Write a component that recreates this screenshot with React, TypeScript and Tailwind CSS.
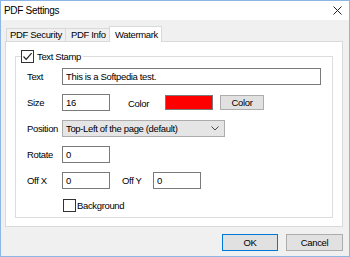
import React from "react";

function Check({ checked }: { checked?: boolean }) {
  return (
    <span className="w-[13px] h-[13px] border border-[#333333] bg-white flex items-center justify-center shrink-0">
      {checked && (
        <svg width="11" height="11" viewBox="0 0 11 11">
          <path d="M1.5 5.5L4.2 8.3L9.6 2.2" fill="none" stroke="#222" strokeWidth="1.2" />
        </svg>
      )}
    </span>
  );
}

function Input({ value, w }: { value: string; w: string }) {
  return (
    <div className={`${w} h-[17px] border border-[#7a7a7a] bg-white flex items-center pl-[3px] shrink-0`}>
      {value}
    </div>
  );
}

export default function App() {
  return (
    <div className="w-[350px] h-[257px] border border-[#8db6e6] bg-[#f0f0f0] flex flex-col font-['Liberation_Sans',Arial,sans-serif] text-[9.5px] tracking-[-0.35px] text-black leading-none whitespace-nowrap overflow-hidden">
      <div className="h-[19px] bg-white flex items-center justify-between pl-[3px] pr-[7px] shrink-0">
        <span className="text-[10px] tracking-[-0.3px]">PDF Settings</span>
        <svg width="9" height="9" viewBox="0 0 9 9">
          <path d="M0.5 0.5L8.5 8.5M8.5 0.5L0.5 8.5" stroke="#222" strokeWidth="1" />
        </svg>
      </div>
      <div className="pl-[4px] pt-[6px]">
        <div className="flex items-end h-[15px] pl-[1px]">
          <div className="w-[60px] h-[13px] border border-b-0 border-[#d9d9d9] bg-[#f0f0f0] flex items-center justify-center">
            PDF Security
          </div>
          <div className="w-[45px] h-[13px] border border-b-0 border-l-0 border-[#d9d9d9] bg-[#f0f0f0] flex items-center pl-[5px]">
            PDF Info
          </div>
          <div className="w-[53px] h-[16px] -mb-[1px] -ml-[2px] relative z-10 border border-b-0 border-[#d9d9d9] bg-white flex items-center pl-[5px]">
            Watermark
          </div>
        </div>
        <div className="w-[338px] h-[186px] bg-white border border-[#d9d9d9]">
          <fieldset className="ml-[9px] mt-[8px] w-[318px] h-[168px] border border-[#dcdcdc]">
            <legend className="ml-[5px] pr-[2px] flex items-center gap-[3px] h-[13px]">
              <Check checked />
              <span>Text Stamp</span>
            </legend>
            <div className="flex flex-col gap-[9px] pl-[11px] mt-[5px]">
              <div className="flex items-center h-[17px]">
                <span className="w-[35px] shrink-0">Text</span>
                <Input value="This is a Softpedia test." w="w-[259px]" />
              </div>
              <div className="flex items-center h-[17px]">
                <span className="w-[35px] shrink-0">Size</span>
                <Input value="16" w="w-[48px]" />
                <span className="w-[37px] ml-[18px] shrink-0 pt-[2px]">Color</span>
                <div className="w-[48px] h-[15px] bg-[#ff0000] border border-[#7a7a7a] shrink-0" />
                <div className="ml-[7px] w-[44px] h-[15px] bg-[#e1e1e1] border border-[#adadad] flex items-center justify-center shrink-0">
                  Color
                </div>
              </div>
              <div className="flex items-center h-[17px]">
                <span className="w-[35px] shrink-0">Position</span>
                <div className="w-[163px] h-[17px] bg-[#e5e5e5] border border-[#acacac] flex items-center justify-between pl-[3px] pr-[5px] shrink-0">
                  <span>Top-Left of the page (default)</span>
                  <svg width="8" height="5" viewBox="0 0 8 5">
                    <path d="M0.5 0.5L4 4L7.5 0.5" fill="none" stroke="#444" strokeWidth="1" />
                  </svg>
                </div>
              </div>
              <div className="flex items-center h-[17px]">
                <span className="w-[35px] shrink-0">Rotate</span>
                <Input value="0" w="w-[48px]" />
              </div>
              <div className="flex items-center h-[17px]">
                <span className="w-[35px] shrink-0">Off X</span>
                <Input value="0" w="w-[48px]" />
                <span className="w-[31px] ml-[12px] shrink-0">Off Y</span>
                <Input value="0" w="w-[48px]" />
              </div>
              <div className="flex items-center h-[13px] pl-[36px] mt-[1px] gap-[1px]">
                <Check />
                <span>Background</span>
              </div>
            </div>
          </fieldset>
        </div>
        <div className="flex justify-end gap-[8px] mt-[7px] w-[338px]">
          <div className="w-[56px] h-[17px] bg-[#e1e1e1] border border-[#0078d7] flex items-center justify-center">
            OK
          </div>
          <div className="w-[57px] h-[17px] bg-[#e1e1e1] border border-[#adadad] flex items-center justify-center">
            Cancel
          </div>
        </div>
      </div>
    </div>
  );
}
